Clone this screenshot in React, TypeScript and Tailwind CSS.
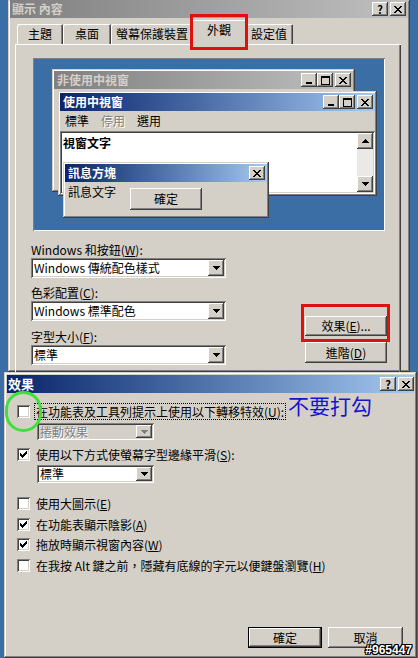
import type { ReactNode } from "react";

// classic 3D edges
const RAISED =
  "shadow-[inset_-1px_-1px_0_#404040,inset_1px_1px_0_#ffffff,inset_-2px_-2px_0_#808080,inset_2px_2px_0_#d4d0c8]";
const FRAME =
  "shadow-[inset_-1px_-1px_0_#404040,inset_1px_1px_0_#d4d0c8,inset_-2px_-2px_0_#808080,inset_2px_2px_0_#ffffff]";
const SUNKEN =
  "shadow-[inset_1px_1px_0_#808080,inset_-1px_-1px_0_#ffffff,inset_2px_2px_0_#404040,inset_-2px_-2px_0_#d4d0c8]";

const CloseGlyph = () => (
  <svg width="8" height="7" viewBox="0 0 8 7" shapeRendering="crispEdges">
    <path
      fill="#000"
      d="M0 0h2v1H0zM6 0h2v1H6zM1 1h2v1H1zM5 1h2v1H5zM2 2h4v1H2zM3 3h2v1H3zM2 4h4v1H2zM1 5h2v1H1zM5 5h2v1H5zM0 6h2v1H0zM6 6h2v1H6z"
    />
  </svg>
);

const MinGlyph = () => (
  <svg width="8" height="8" viewBox="0 0 8 8" shapeRendering="crispEdges">
    <path fill="#000" d="M1 6h6v2H1z" />
  </svg>
);

const MaxGlyph = () => (
  <svg width="9" height="9" viewBox="0 0 9 9" shapeRendering="crispEdges">
    <path fill="#000" d="M0 0h9v2H0zM0 2h1v7H0zM8 2h1v7H8zM1 8h7v1H1z" />
  </svg>
);

const DownArrow = ({ gray }: { gray?: boolean }) => (
  <svg width="7" height="4" viewBox="0 0 7 4" shapeRendering="crispEdges">
    <path fill={gray ? "#808080" : "#000"} d="M0 0h7v1H0zM1 1h5v1H1zM2 2h3v1H2zM3 3h1v1H3z" />
  </svg>
);

const UpArrow = () => (
  <svg width="7" height="4" viewBox="0 0 7 4" shapeRendering="crispEdges">
    <path fill="#000" d="M3 0h1v1H3zM2 1h3v1H2zM1 2h5v1H1zM0 3h7v1H0z" />
  </svg>
);

const CheckMark = () => (
  <svg width="7" height="7" viewBox="0 0 7 7" shapeRendering="crispEdges">
    <path
      fill="#000"
      d="M6 0h1v1H6zM5 1h2v1H5zM0 2h1v1H0zM4 2h3v1H4zM0 3h2v1H0zM3 3h3v1H3zM0 4h5v1H0zM1 5h3v1H1zM2 6h1v1H2z"
    />
  </svg>
);

function TitleBtn({ children }: { children: ReactNode }) {
  return (
    <div className={`w-[16px] h-[14px] bg-[#d4d0c8] flex items-center justify-center ${RAISED}`}>
      {children}
    </div>
  );
}

function Select({ text, className, disabled }: { text: string; className: string; disabled?: boolean }) {
  return (
    <div className={`flex items-stretch ${disabled ? "bg-[#d4d0c8]" : "bg-white"} ${SUNKEN} ${className}`}>
      <div
        className={`flex-1 flex items-center pl-[3px] whitespace-nowrap ${
          disabled ? "text-[#808080] [text-shadow:1px_1px_0_#ffffff]" : ""
        }`}
      >
        {text}
      </div>
      <div className={`w-[16px] m-[2px] bg-[#d4d0c8] flex items-center justify-center ${RAISED}`}>
        <DownArrow gray={disabled} />
      </div>
    </div>
  );
}

function Checkbox({ checked }: { checked?: boolean }) {
  return (
    <div className={`w-[13px] h-[13px] shrink-0 bg-white flex items-center justify-center ${SUNKEN}`}>
      {checked && <CheckMark />}
    </div>
  );
}

function CheckRow({
  checked,
  focused,
  className,
  children,
}: {
  checked?: boolean;
  focused?: boolean;
  className: string;
  children: ReactNode;
}) {
  return (
    <div className={`flex items-center h-[17px] ${className}`}>
      <Checkbox checked={checked} />
      <span
        className={`ml-[5px] px-[1px] whitespace-nowrap leading-[15px] ${
          focused ? "outline-1 outline-dotted outline-black" : ""
        }`}
      >
        {children}
      </span>
    </div>
  );
}

function Preview() {
  return (
    <div className="ml-[18px] mt-[13px] w-[352px] h-[173px] bg-[#3a6ea5] relative shadow-[inset_1px_1px_0_#808080,inset_-1px_-1px_0_#ffffff]">
      {/* inactive window */}
      <div className={`absolute left-[19px] top-[11px] w-[303px] h-[123px] bg-[#d4d0c8] p-[2px] ${FRAME}`}>
        <div className="h-[18px] bg-linear-to-r from-[#808080] to-[#c0c0c0] flex items-center pl-[3px] pr-[2px]">
          <span className="font-bold text-[#d4d0c8]">非使用中視窗</span>
          <div className="ml-auto flex">
            <TitleBtn><MinGlyph /></TitleBtn>
            <TitleBtn><MaxGlyph /></TitleBtn>
            <div className="ml-[2px]"><TitleBtn><CloseGlyph /></TitleBtn></div>
          </div>
        </div>
      </div>

      {/* active window */}
      <div className={`absolute left-[25px] top-[33px] w-[319px] h-[105px] bg-[#d4d0c8] p-[2px] flex flex-col ${FRAME}`}>
        <div className="h-[18px] shrink-0 bg-linear-to-r from-[#0a246a] to-[#a6caf0] flex items-center pl-[3px] pr-[2px]">
          <span className="font-bold text-white">使用中視窗</span>
          <div className="ml-auto flex">
            <TitleBtn><MinGlyph /></TitleBtn>
            <TitleBtn><MaxGlyph /></TitleBtn>
            <div className="ml-[2px]"><TitleBtn><CloseGlyph /></TitleBtn></div>
          </div>
        </div>
        <div className="h-[20px] shrink-0 flex items-center pl-[5px] gap-[12px]">
          <span>標準</span>
          <span className="text-[#808080] [text-shadow:1px_1px_0_#ffffff]">停用</span>
          <span>選用</span>
        </div>
        <div className={`flex-1 bg-white flex ${SUNKEN}`}>
          <div className="flex-1 pl-[3px] pt-[5px] font-bold">視窗文字</div>
          <div className="w-[16px] my-[2px] mr-[2px] flex flex-col">
            <div className={`h-[16px] bg-[#d4d0c8] flex items-center justify-center ${RAISED}`}>
              <UpArrow />
            </div>
            <div className="flex-1 bg-[#ebe9e5]" />
            <div className={`h-[16px] bg-[#d4d0c8] flex items-center justify-center ${RAISED}`}>
              <DownArrow />
            </div>
          </div>
        </div>
      </div>

      {/* message box */}
      <div className={`absolute left-[30px] top-[104px] w-[206px] h-[56px] bg-[#d4d0c8] p-[2px] ${FRAME}`}>
        <div className="h-[18px] bg-linear-to-r from-[#0a246a] to-[#a6caf0] flex items-center pl-[3px] pr-[2px]">
          <span className="font-bold text-white">訊息方塊</span>
          <div className="ml-auto">
            <TitleBtn><CloseGlyph /></TitleBtn>
          </div>
        </div>
        <div className="flex items-start pl-[3px]">
          <span className="mt-[3px]">訊息文字</span>
          <div className={`ml-[14px] mt-[6px] w-[72px] h-[22px] flex items-center justify-center ${RAISED}`}>
            確定
          </div>
        </div>
      </div>
    </div>
  );
}

function DisplayDialog() {
  const tabs = [
    { label: "主題", w: "w-[46px]" },
    { label: "桌面", w: "w-[48px]" },
    { label: "螢幕保護裝置", w: "w-[82px]" },
  ];
  return (
    <div className={`ml-[8px] w-[402px] h-[372px] bg-[#d4d0c8] px-[2px] relative overflow-hidden ${FRAME}`}>
      <div className="h-[18px] bg-linear-to-r from-[#808080] to-[#c0c0c0] flex items-center pl-[2px] pr-[2px]">
        <span className="font-bold text-[#d4d0c8]">顯示 內容</span>
        <div className="ml-auto flex gap-[2px]">
          <TitleBtn><span className="font-bold text-[11px] leading-none">?</span></TitleBtn>
          <TitleBtn><CloseGlyph /></TitleBtn>
        </div>
      </div>

      <div className="pl-[5px]">
        {/* tabs */}
        <div className="mt-[2px] h-[24px] flex items-end pl-[2px]">
          {tabs.map((t) => (
            <div
              key={t.label}
              className={`${t.w} h-[20px] flex items-center justify-center rounded-t-[2px] shadow-[inset_1px_1px_0_#ffffff,inset_-1px_0_0_#404040,inset_-2px_0_0_#808080]`}
            >
              {t.label}
            </div>
          ))}
          <div className="relative z-10 -mx-[2px] w-[56px] h-[25px] -mb-[1px] bg-[#d4d0c8] flex items-start pt-[3px] justify-center rounded-t-[2px] shadow-[inset_1px_1px_0_#ffffff,inset_-1px_0_0_#404040,inset_-2px_0_0_#808080]">
            外觀
            <span className="absolute -left-[1px] -right-[1px] -top-[6px] -bottom-[5px] border-[3px] border-[#e01010]" />
          </div>
          <div className="w-[48px] h-[20px] flex items-center justify-center rounded-t-[2px] shadow-[inset_1px_1px_0_#ffffff,inset_-1px_0_0_#404040,inset_-2px_0_0_#808080]">
            設定值
          </div>
        </div>

        {/* panel */}
        <div className="w-[386px] h-[340px] shadow-[inset_1px_1px_0_#ffffff,inset_-1px_-1px_0_#404040,inset_-2px_-2px_0_#808080] pt-px">
          <Preview />
          <div className="mt-[12px] pl-[16px] pr-[14px] flex justify-between items-end">
            <div className="flex flex-col">
              <span>Windows 和按鈕(<u>W</u>):</span>
              <Select text="Windows 傳統配色樣式" className="mt-[1px] w-[195px] h-[20px]" />
              <span className="mt-[8px]">色彩配置(<u>C</u>):</span>
              <Select text="Windows 標準配色" className="mt-[1px] w-[195px] h-[20px]" />
              <span className="mt-[9px]">字型大小(<u>F</u>):</span>
              <Select text="標準" className="mt-[1px] w-[195px] h-[20px]" />
            </div>
            <div className="flex flex-col gap-[6px] pb-[2px]">
              <div className="relative">
                <div className={`w-[82px] h-[20px] flex items-center justify-center ${RAISED}`}>
                  效果(<u>E</u>)...
                </div>
                <span className="absolute -left-[4px] -right-[3px] -top-[12px] -bottom-[6px] border-[3px] border-[#e01010]" />
              </div>
              <div className={`w-[82px] h-[21px] flex items-center justify-center ${RAISED}`}>
                進階(<u>D</u>)
              </div>
            </div>
          </div>
        </div>
      </div>
    </div>
  );
}

function EffectsDialog() {
  return (
    <div className={`ml-[4px] w-[413px] h-[286px] bg-[#d4d0c8] p-[3px] relative flex flex-col ${FRAME}`}>
      <div className="h-[18px] shrink-0 bg-linear-to-r from-[#0a246a] to-[#a6caf0] flex items-center pl-[1px] pr-[0px]">
        <span className="font-bold text-white text-[13px]">效果</span>
        <div className="ml-auto flex gap-[2px]">
          <TitleBtn><span className="font-bold text-[11px] leading-none">?</span></TitleBtn>
          <TitleBtn><CloseGlyph /></TitleBtn>
        </div>
      </div>

      <div className="pl-[10px] flex flex-col">
        <CheckRow focused className="mt-[10px]">
          在功能表及工具列提示上使用以下轉移特效(<u>U</u>):
        </CheckRow>
        <Select disabled text="捲動效果" className="mt-[3px] ml-[20px] w-[117px] h-[17px]" />
        <CheckRow checked className="mt-[6px]">
          使用以下方式使螢幕字型邊緣平滑(<u>S</u>):
        </CheckRow>
        <Select text="標準" className="mt-[2px] ml-[20px] w-[117px] h-[18px]" />
        <CheckRow className="mt-[12px]">
          使用大圖示(<u>E</u>)
        </CheckRow>
        <CheckRow checked className="mt-[4px]">
          在功能表顯示陰影(<u>A</u>)
        </CheckRow>
        <CheckRow checked className="mt-[3px]">
          拖放時顯示視窗內容(<u>W</u>)
        </CheckRow>
        <CheckRow className="mt-[4px]">
          在我按 Alt 鍵之前，隱藏有底線的字元以便鍵盤瀏覽(<u>H</u>)
        </CheckRow>
      </div>

      <div className="mt-auto mb-[7px] pr-[11px] flex justify-end gap-[6px]">
        <div className="w-[74px] h-[21px] border border-black">
          <div className={`w-full h-full flex items-center justify-center ${RAISED}`}>確定</div>
        </div>
        <div className={`w-[75px] h-[21px] flex items-center justify-center ${RAISED}`}>取消</div>
      </div>

      {/* annotations */}
      <span className="absolute left-[1px] top-[19px] w-[37px] h-[41px] rounded-full border-[3px] border-[#3de03d]" />
      <span className="absolute left-[284px] top-[21px] text-[21px] leading-[24px] text-[#1414d2]">不要打勾</span>
    </div>
  );
}

export default function App() {
  return (
    <div className="w-[418px] h-[658px] bg-[#3a6ea5] relative overflow-hidden font-['Noto_Sans_CJK_TC',sans-serif] text-[12px] leading-[14px] text-black">
      <DisplayDialog />
      <EffectsDialog />
      <span className="absolute right-[6px] bottom-[2px] font-['Liberation_Sans',sans-serif] font-bold text-[12px] leading-[12px] text-white [text-shadow:1px_0_0_#000,-1px_0_0_#000,0_1px_0_#000,0_-1px_0_#000,1px_1px_0_#000,-1px_-1px_0_#000,1px_-1px_0_#000,-1px_1px_0_#000]">
        #965447
      </span>
    </div>
  );
}
